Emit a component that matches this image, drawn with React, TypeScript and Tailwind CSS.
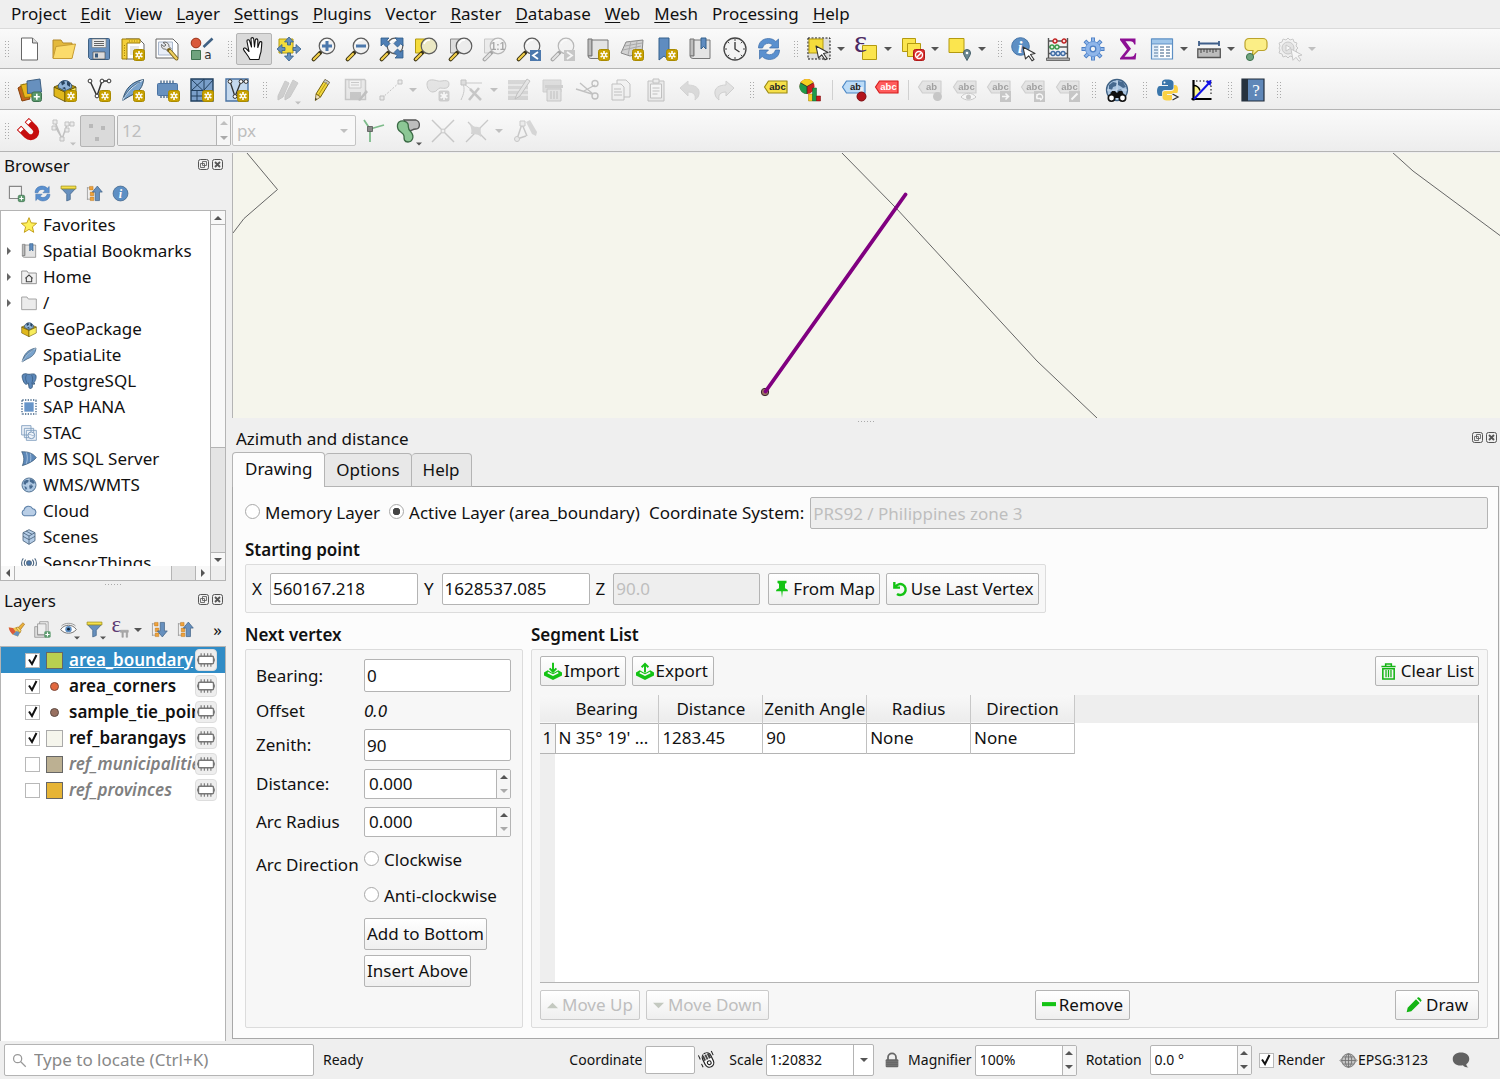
import React, { ReactNode } from "react";

/* ---------- shared drawing parts ---------- */

const Badge = ({ gray = false }: { gray?: boolean }) => (
  <g>
    <rect x="12.5" y="12.5" width="11" height="11" rx="2" fill={gray ? "#c4c4c4" : "#c9a200"} stroke={gray ? "#b4b4b4" : "#a98a00"} />
    <path d="M18 14v8M14.6 16l6.8 4M21.4 16l-6.8 4" stroke="#fff" strokeWidth="1.6" />
    <circle cx="18" cy="18" r="1.1" fill={gray ? "#c4c4c4" : "#c9a200"} />
  </g>
);

const Lens = ({ fill = "#f1f1f1" }: { fill?: string }) => (
  <g>
    <path d="M9.5 14.5L7.5 16.5" stroke="#444" strokeWidth="2.4" />
    <path d="M8.3 15.7L1.6 22.4" stroke="#3c3416" strokeWidth="4" strokeLinecap="round" />
    <path d="M7 17L1.8 22.2" stroke="#f2cf4a" strokeWidth="2.2" strokeLinecap="round" />
    <circle cx="15" cy="9" r="7.8" fill={fill} stroke="#5c5c5c" strokeWidth="1.2" />
    <path d="M10 7a6 6 0 0 1 6-4" fill="none" stroke="#fff" strokeWidth="1.5" />
  </g>
);

const Tag = ({ fill, stroke, text = "abc", color = "#222" }: { fill: string; stroke: string; text?: string; color?: string }) => (
  <g>
    <path d="M.5 9l4-6h18.500v12H4.500z" fill={fill} stroke={stroke} strokeLinejoin="round" strokeWidth="1.2" />
    <text x="13.500" y="12.200" textAnchor="middle" fontSize="9.500" fontWeight="700" fill={color} fontFamily="Liberation Sans, sans-serif">{text}</text>
  </g>
);

const Globe = () => (
  <g>
    <circle cx="12" cy="12" r="10.5" fill="#a9c4e0" stroke="#3f6184" strokeWidth="1.3" />
    <path d="M4 7l4-3 4 1-1 3-3 1-1 3-3-1zM13 3l5 1 3 5-3 1-3-2-2-1zM12 12l4-1 2 3-2 3-3 1-1-4zM5 14l3 1 1 3-2 1z" fill="#46698f" />
    <path d="M2 12h20M12 2v20" stroke="#dfeaf5" strokeWidth=".6" />
  </g>
);

const Refresh = () => (
  <g fill="#5a90cf" stroke="#3b6ca8" strokeWidth=".7" strokeLinejoin="round">
    <path d="M1.5 11C1.5 5 6 1.5 11.5 1.5c3 0 5.500 1.200 7.300 3l2.700-2.500v9h-9l3-3c-1-1-2.500-1.700-4-1.700C8.500 6.300 6.500 8 5.500 11z" />
    <path d="M22.500 13c0 6-4.500 9.500-10 9.500-3 0-5.500-1.200-7.300-3L2.500 22v-9h9l-3 3c1 1 2.500 1.700 4 1.700 3 0 5-1.700 6-4.700z" />
  </g>
);

const Floppy = () => (
  <g>
    <path d="M1.500 2.500a1 1 0 0 1 1-1h19a1 1 0 0 1 1 1v19a1 1 0 0 1-1 1h-18l-2-2z" fill="#6790be" stroke="#3f6184" />
    <path d="M5 2h14v8.500H5z" fill="#ececec" stroke="#777" strokeWidth=".6" />
    <path d="M7 4.500h10M7 6.500h10M7 8.500h10" stroke="#555" strokeWidth=".9" />
    <path d="M6 15h12v7H6z" fill="#dcdcdc" stroke="#444" strokeWidth=".6" />
    <path d="M8 16.500h3v4H8z" fill="#37587b" />
  </g>
);

const Pencil = () => (
  <g>
    <path d="M6 16L15 1.500l4.500 2.800L10.500 19z" fill="#f2d73c" stroke="#75600c" />
    <path d="M13.700 3.800L15 1.500l4.500 2.800-1.400 2.300z" fill="#c8c8c8" stroke="#777" strokeWidth=".7" />
    <path d="M6 16l-.7 6.500L10.500 19z" fill="#f1e2c0" stroke="#75600c" strokeWidth=".8" />
    <path d="M5.300 22.500l.2-2.500 1.600 1.100z" fill="#222" />
    <path d="M8.500 17L16.500 4" stroke="#b59a14" />
  </g>
);

const Funnel = () => (
  <g>
    <path d="M2 5l7.500 8v9.500l5-2V13L22 5z" fill="#6790be" stroke="#3f6184" />
    <path d="M1.500 1.500h21v4h-21z" fill="#f5e04a" stroke="#9b8a14" />
  </g>
);

const Info = () => (
  <g>
    <circle cx="12" cy="12" r="10.500" fill="#5d8fc4" stroke="#3f6184" />
    <text x="12" y="18" textAnchor="middle" fontSize="17" fontStyle="italic" fontWeight="700" fill="#fff" fontFamily="Liberation Serif, serif">i</text>
  </g>
);

const Cursor = () => <path d="M9 9l12 6.500-4.500 1 3.500 5-2 1.300-3.300-5-3.200 3z" fill="#fff" stroke="#333" strokeWidth="1.100" strokeLinejoin="round" />;

const TreeArrow = ({ up }: { up: boolean }) => (
  <g>
    <path d="M2 3v18M2 4h6M2 20h6" stroke="#888" fill="none" />
    <path d="M5 2h5v5H5zM6 10h5v5H6zM6 17h5v5H6z" fill="#f0a23a" stroke="#b06c10" strokeWidth=".6" />
    {up ? <path d="M13 22V10H9l7-8.500 7 8.500h-4v12z" fill="#6790be" stroke="#3f6184" /> : <path d="M13 2v12H9l7 8.500 7-8.500h-4V2z" fill="#6790be" stroke="#3f6184" />}
  </g>
);

const Box = () => (
  <g>
    <path d="M1 9l11 5v9.500L1 18z" fill="#e0b81c" stroke="#5c4a05" strokeWidth=".8" />
    <path d="M23 9l-11 5v9.500L23 18z" fill="#f7ec5c" stroke="#5c4a05" strokeWidth=".8" />
    <path d="M1 9l11-5 11 5-11 5z" fill="#c9a200" stroke="#5c4a05" strokeWidth=".8" />
    <path d="M5 9.500a7 7 0 1 1 14 0L12 13z" fill="#8fb2d6" stroke="#37587b" />
    <path d="M8 4l3-1.500 1 3-3 2zM14 3l3 2v4l-3-2zM9 10l3-1 1 3z" fill="#29445f" />
  </g>
);

const Feather = () => (
  <g>
    <path d="M1.500 22.500C4 12 9 4 22.500 1.500 22 8 19 14 9 18z" fill="#7aa3cc" stroke="#34536f" strokeLinejoin="round" />
    <path d="M1.500 22.500C6 14 12 8 22 2" fill="none" stroke="#dbe8f5" />
    <path d="M3 19C7 12 12 7 19 4" fill="none" stroke="#34536f" strokeWidth=".7" />
  </g>
);

const Chip = () => (
  <g>
    <path d="M5 2.500v4M8 2.500v4M11 2.500v4M14 2.500v4M17 2.500v4M5 16v4M8 16v4M11 16v4M14 16v4M17 16v4" stroke="#3f6184" strokeWidth="1.300" />
    <rect x="1.500" y="5.500" width="20" height="12" rx="1" fill="#6790be" stroke="#4a73a3" />
  </g>
);

const Book = () => (
  <g>
    <path d="M2 2h4v17H2z" fill="#bdbdbd" stroke="#777" />
    <path d="M6 3h16v18.500H5A3 3 0 0 1 2 19h4z" fill="#e4e4e4" stroke="#777" />
  </g>
);

const Rings = ({ points }: { points: [number, number][] }) => (
  <g>{points.map(([x, y]) => <circle key={`${x}-${y}`} cx={x} cy={y} r="1.900" fill="#fff" stroke="#333" />)}</g>
);

/* ---------- icon table (24 x 24 grid) ---------- */

const icons: Record<string, ReactNode> = {
  newDoc: <g><path d="M3.500 1h11l5 5v17h-16z" fill="#fff" stroke="#666" /><path d="M14.500 1v5h5" fill="#ddd" stroke="#666" /></g>,
  open: <g><path d="M1 3h8l2 3h9v15H1z" fill="#e3b93c" stroke="#b3892a" /><path d="M4 9.500L23.500 7 20 21.500H1z" fill="#fbdb6b" stroke="#c79c33" /></g>,
  save: <Floppy />,
  newLayout: <g><path d="M5 2h13l5 5v15H5z" fill="#fff" stroke="#666" /><path d="M1 2h18v4H6v16H1z" fill="#f4cf3a" stroke="#9a7a08" /><path d="M9 9h9v9H9z" fill="#e8e8e8" /><path d="M3.500 8v12M8 4h9" stroke="#9a7a08" strokeDasharray="1 1.500" /><Badge /></g>,
  layoutManager: <g><path d="M1 2h17l5 5v14H1z" fill="#fff" stroke="#666" /><path d="M3.500 5h14v13h-14z" fill="#e9eef7" stroke="#a9b7cc" /><path d="M8 5.500c3-1 6 .5 6 4l2 2-3 3-2.500-2.500c-3 .5-4.500-2-4-4.500l2.500 2 2-1.500z" fill="#e8e8e8" stroke="#666" /><path d="M14 13l7.500 8.500" stroke="#77601a" strokeWidth="4" strokeLinecap="round" /><path d="M15 14l6.500 7.500" stroke="#f0d060" strokeWidth="2.200" strokeLinecap="round" /></g>,
  style: <g><circle cx="6" cy="6" r="4.800" fill="#d9593b" stroke="#9b3217" /><path d="M13.500 10L22.500 1.500" stroke="#3f6184" strokeWidth="2.600" /><path d="M1.500 13.500h9v9h-9z" fill="#6fa37e" stroke="#3f7350" /><text x="18" y="22" textAnchor="middle" fontSize="12" fill="#333" fontFamily="DejaVu Sans, sans-serif">a</text></g>,
  hand: <path d="M8 22.500C6 18 3 15.500 1.500 12.500 1.200 11 3 10.200 4.500 12L7 14.500 5 4.500c-.3-2 2-2.300 2.600-.6L9.500 10 9 2c0-1.800 2.500-1.800 2.700 0L12.500 10l.8-7c.3-1.700 2.500-1.500 2.500.3L15.800 10.500l1.700-5c.6-1.500 2.500-1 2.300.6-.5 4 0 8-1.800 12L17 22.500z" fill="#fff" stroke="#111" strokeWidth="1.100" strokeLinejoin="round" />,
  panSel: <g><path d="M2 2h14v14H2z" fill="#f5dc3c" stroke="#b39a10" /><g fill="#6790be" stroke="#35608c" strokeWidth=".8"><path d="M12 0l4.500 5h-3v3h-3V5h-3zM12 24l4.500-5h-3v-3h-3v3h-3zM0 12l5-4.500v3h3v3H5v3zM24 12l-5-4.500v3h-3v3h3v3z" /></g><path d="M10 10h4v4h-4z" fill="#f5dc3c" /></g>,
  zoomIn: <g><Lens /><path d="M15 4v10M10 9h10" stroke="#4c78ac" strokeWidth="3" /></g>,
  zoomOut: <g><Lens /><path d="M10 9h10" stroke="#4c78ac" strokeWidth="3" /></g>,
  zoomFull: <g><Lens /><g fill="#4f7fb5" stroke="#2f5a88" strokeWidth=".8"><path d="M1 1h8L6.800 3.200 10 6.500 6.500 10 3.200 6.800 1 9zM23 1h-8l2.200 2.200L14 6.500 17.500 10l3.300-3.200L23 9zM23 21h-8l2.200-2.200L14 15.500 17.500 12l3.300 3.200L23 13z" /></g></g>,
  zoomSel: <g><path d="M1.500 2h12v14h-12z" fill="#f5dc3c" stroke="#b39a10" /><Lens fill="#ebe8c4" /></g>,
  zoomLayer: <g><path d="M1.500 2h12v14h-12z" fill="#ddd" stroke="#888" /><Lens fill="#ececec" /></g>,
  zoomNative: <g><path d="M1.500 2h12v14h-12z" fill="#ddd" stroke="#888" /><Lens /><text x="15" y="12.500" textAnchor="middle" fontSize="10" fontWeight="700" fill="#333" fontFamily="Liberation Sans, sans-serif">1:1</text></g>,
  zoomLast: <g><Lens /><path d="M13 13h11v11H13z" fill="#4c78ac" /><path d="M21 15l-5 3.500 5 3.500" fill="none" stroke="#fff" strokeWidth="1.800" /></g>,
  zoomNext: <g><Lens /><path d="M13 13h11v11H13z" fill="#888" /><path d="M16 15l5 3.500-5 3.500" fill="none" stroke="#fff" strokeWidth="1.800" /></g>,
  newMap: <g><Book /><Badge /></g>,
  new3d: <g><path d="M6 5l17-2-1 13-12 3-9-3z" fill="#d2d2d2" stroke="#888" /><path d="M5 9l17-3M3 13l18-4M11 4l-3 14M17 4l-2 13" stroke="#aaa" fill="none" /><Badge /></g>,
  newBookmark: <g><path d="M5 1h10v22l-5-4-5 4z" fill="#5f8cc0" stroke="#35608c" /><Badge /></g>,
  bookmarks: <g><Book /><path d="M13 1h5v11l-2.500-2.500L13 12z" fill="#5f8cc0" stroke="#35608c" /></g>,
  clock: <g><circle cx="12" cy="12" r="11" fill="#f3f3f3" stroke="#444" strokeWidth="1.300" /><path d="M12 2v2M12 20v2M2 12h2M20 12h2M5 5l1.200 1.200M19 5l-1.200 1.200M5 19l1.200-1.200M19 19l-1.200-1.200" stroke="#444" /><path d="M12 5v7l4.500 3" fill="none" stroke="#333" strokeWidth="1.300" /></g>,
  refresh: <Refresh />,
  select: <g><path d="M1 1h22v21H1z" fill="#dedede" stroke="#111" strokeDasharray="2 1.500" /><path d="M2 2h14v14H2z" fill="#f5dc3c" stroke="#b39a10" /><Cursor /></g>,
  expr: <g><path d="M8.500 8.500h14v14h-14z" fill="#fbe54e" stroke="#b39a10" /><text x="6.500" y="15" textAnchor="middle" fontSize="31" fill="#4b2a63" fontFamily="Liberation Serif, serif">ε</text></g>,
  deselect: <g><path d="M1.500 1.500h13v13h-13z" fill="#fbe54e" stroke="#b39a10" /><path d="M6.500 6.500h13v13h-13z" fill="#fbe54e" stroke="#b39a10" /><rect x="12.500" y="12.500" width="11" height="11" rx="2" fill="#d93030" stroke="#b01818" /><circle cx="18" cy="18" r="3.500" fill="none" stroke="#fff" strokeWidth="1.400" /><path d="M20.500 15.500l-5 5" stroke="#fff" strokeWidth="1.400" /></g>,
  selectLoc: <g><path d="M1 1.500h15v14H1z" fill="#fbe54e" stroke="#b39a10" /><path d="M19 23.500c-2-4-3.500-5.500-3.500-7.500a3.500 3.500 0 0 1 7 0c0 2-1.500 3.500-3.500 7.500z" fill="#6a8791" stroke="#46606a" /><circle cx="19" cy="16" r="1.300" fill="#fff" /></g>,
  identify: <g><circle cx="9.500" cy="9.500" r="8.800" fill="#5d8fc4" stroke="#4574a8" /><text x="9" y="15.500" textAnchor="middle" fontSize="17" fontStyle="italic" fontWeight="700" fill="#fff" fontFamily="Liberation Serif, serif">i</text><g transform="translate(3 1)"><Cursor /></g></g>,
  abacus: <g><path d="M2.500 1v20M21.500 1v20M2 4h20M2 10h20M2 16.500h20" stroke="#555" fill="none" strokeWidth="1.400" /><path d="M.5 21h23v2.500H.5z" fill="#aaa" stroke="#555" strokeWidth=".8" /><g strokeWidth="1.300"><g fill="#fbdede" stroke="#c02020"><circle cx="9" cy="4" r="2" /><circle cx="18" cy="4" r="2" /></g><g fill="#ddf3dd" stroke="#3a9a4a"><circle cx="6" cy="10" r="2" /><circle cx="11" cy="10" r="2" /></g><g fill="#dde8f6" stroke="#3f6ca6"><circle cx="7" cy="16.500" r="2" /><circle cx="12" cy="16.500" r="2" /><circle cx="17" cy="16.500" r="2" /></g></g></g>,
  gear: <g><path d="M12 .5v23M.5 12h23M3.900 3.900l16.200 16.200M20.100 3.900L3.900 20.100" stroke="#4c7fc4" strokeWidth="4" /><path d="M12 1.300v21.400M1.300 12h21.400M4.500 4.500l15 15M19.500 4.500l-15 15" stroke="#8fb6ea" strokeWidth="2.200" /><circle cx="12" cy="12" r="7.500" fill="#8fb6ea" stroke="#6a99d8" /><circle cx="12" cy="12" r="2.800" fill="#f4f4f4" stroke="#4c7fc4" strokeWidth="1.300" /></g>,
  sigma: <path d="M4 1.500h15.500v6h-1.300C17.700 5 16.500 4.200 14 4.200H9.500l5.500 7.500-6.500 8h6c3 0 4-1 4.500-3.500h1.300l-.7 6.300H4v-1.300l7-8.700L4 3z" fill="#8d0f94" />,
  table: <g><path d="M1.500 2h21v20h-21z" fill="#fff" stroke="#5d8fc4" strokeWidth="1.200" /><path d="M1.500 2h21v5h-21z" fill="#9fc6ea" stroke="#5d8fc4" /><path d="M4 10h4M10 10h4M16 10h4M4 13h4M10 13h4M16 13h4M4 16h4M10 16h4M16 16h4M4 19h4M10 19h4M16 19h4" stroke="#7a93ad" strokeWidth="1.300" /><path d="M2 8h7v14H2z" fill="#9fc6ea" opacity=".3" /></g>,
  measure: <g><path d="M1.500 6.500h21M2 4v5M22 4v5" stroke="#3f5f8a" strokeWidth="1.800" /><path d="M.8 12h22.500v8.500H.8z" fill="#bcbcbc" stroke="#555" strokeWidth="1.300" /><path d="M4 12v4M7 12v3M10 12v4M13 12v3M16 12v4M19 12v3" stroke="#444" /></g>,
  tip: <g><path d="M5 1.500h14a4 4 0 0 1 4 4v4a4 4 0 0 1-4 4h-5l-6 5.500 1-5.500H5a4 4 0 0 1-4-4v-4a4 4 0 0 1 4-4z" fill="#fbee86" stroke="#bba32c" strokeWidth="1.200" /><circle cx="6" cy="20" r="3.600" fill="#6fa37e" stroke="#3f7350" /></g>,
  action: <g fill="#eee" stroke="#888"><path d="M10 1l2 2 3-1 1 3 3 1-1 3 2 2-2 2 1 3-3 1-1 3-3-1-2 2-2-2-3 1-1-3-3-1 1-3-1-2 1-2-1-3 3-1 1-3 3 1z" /><circle cx="10" cy="11" r="6" fill="#ccc" /><path d="M8 8l5 3-5 3z" fill="#fff" /><g transform="translate(4 3)"><path d="M9 9l11 6-4 1 3 4-2 1.300-3-4-3 3z" fill="#fff" /></g></g>,
  addLayer: <g><path d="M0 10l6-4 6 15-8 2z" fill="#c4651b" stroke="#87400a" /><path d="M4 6h9v14l-8-1z" fill="#e8b51e" stroke="#9a7a08" transform="rotate(-12 8 12)" /><path d="M9 3l13-2 1.500 13-14 1.500z" fill="#6790be" stroke="#3f6184" /><rect x="14" y="14" width="9.500" height="9.500" rx="2" fill="#5c9a6e" stroke="#3f7350" /><path d="M18.800 15.800v6M15.800 18.800h6" stroke="#fff" strokeWidth="1.600" /></g>,
  geopackage: <Box />,
  newGpkg: <g><Box /><Badge /></g>,
  newShp: <g><path d="M3 3l7 15 5-15h7" fill="none" stroke="#333" strokeWidth="1.500" /><Rings points={[[3, 3], [10, 18], [15, 3], [22, 3]]} /><Badge /></g>,
  feather: <Feather />,
  newSpatialite: <g><Feather /><Badge /></g>,
  newMem: <g><Chip /><Badge /></g>,
  newMesh: <g><path d="M1 1h22v22H1z" fill="#7a9fca" stroke="#22405f" strokeWidth="1.400" /><path d="M1 12.500h22M14 1v22M2 2l11 10.500M14 1L2 12M14 12L23 2M1 18h13M7 12v11" stroke="#22405f" fill="none" /><Badge /></g>,
  newVirtual: <g><path d="M1 1h22v22H1z" fill="#c5d9ee" stroke="#4a73a3" strokeWidth="1.400" /><path d="M5 3.500l5 15L16 3.500h5" fill="none" stroke="#333" strokeWidth="1.300" /><Rings points={[[5, 3.5], [10, 18.5], [16, 3.5], [21, 3.5]]} /><Badge /></g>,
  pencils: <g><path d="M2 18L9 3l4 2-6 14-5 3zM9 18L17 2l5 3-8 14-5 3z" fill="#999" stroke="#888" /></g>,
  pencil: <Pencil />,
  saveEdits: <g><path d="M1.500 1.500h19l1 1v19h-20z" fill="#d8d8d8" stroke="#888" strokeWidth="1.500" /><path d="M5 2h12v8H5z" fill="#eee" stroke="#888" /><path d="M7 4.500h8M7 7h8" stroke="#888" /><path d="M6 14h11v7H6z" fill="#888" /><path d="M14 22l8-10 2 2-8 9z" fill="#777" /></g>,
  digitize: <g><path d="M3 20L21 4" stroke="#777" strokeDasharray="2 1.500" /><path d="M1 18h4v4H1zM19 2h4v4h-4z" fill="#ddd" stroke="#777" /></g>,
  addPoly: <g><path d="M1 6c0-6 8-4 11-3s11-3 11 3-7 4-9 4-3 4-7 4S1 10 1 6z" fill="#ccc" stroke="#888" /><rect x="12.500" y="12.500" width="11" height="11" rx="2" fill="#999" /><path d="M18 14v8M14.600 16l6.800 4M21.400 16l-6.800 4" stroke="#fff" strokeWidth="1.600" /></g>,
  vertex: <g><path d="M3 5h19M3 5c2 7 1 10-2 17M3 5l10 8" fill="none" stroke="#888" /><path d="M1 2h5v5H1z" fill="#bbb" stroke="#777" /><path d="M9 22L19 10M10 11l11 11" stroke="#888" strokeWidth="2.600" /></g>,
  editAttr: <g><path d="M1 2h20v20H1z" fill="#aaa" /><path d="M1 7h20M1 12h20M1 17h20" stroke="#fff" /><path d="M8 21l2-5L20 1l3 2-10 15z" fill="#ccc" stroke="#777" /></g>,
  trash: <g><path d="M2 2h18v12H2z" fill="#bbb" stroke="#999" /><path d="M4 7h18v3H4z" fill="#999" /><path d="M6 11h14v12H6z" fill="#ccc" stroke="#888" /><path d="M10 13v8M13 13v8M16 13v8" stroke="#777" /></g>,
  cut: <g fill="none" stroke="#777" strokeWidth="1.400"><path d="M1 11l16 5M5 5l13 11M20 7L9 13" /><circle cx="20" cy="5.500" r="3" /><circle cx="20" cy="18" r="3" /></g>,
  copy: <g fill="#eee" stroke="#777"><path d="M8 2h9l4 4v13H8z" /><path d="M3 6h9l3 3v13H3z" /><path d="M5 11h7M5 14h8M5 17h8" /></g>,
  paste: <g fill="#ddd" stroke="#777"><path d="M4 3h16v20H4z" /><path d="M6.500 6h11v14h-11z" fill="#f5f5f5" /><path d="M9 1h6v4H9z" /><path d="M8.500 10h7M8.500 13h7M8.500 16h5" /></g>,
  undo: <path d="M2 10l8-7v4c7 0 12 3 11 9-.5 3-2 4.500-4 6 1-5-1-8-7-8v4z" fill="#b4b4b4" stroke="#a4a4a4" />,
  redo: <path d="M22 10l-8-7v4C7 7 2 10 3 16c.5 3 2 4.500 4 6-1-5 1-8 7-8v4z" fill="#c8c8c8" stroke="#999" />,
  label: <Tag fill="#f6e04a" stroke="#9b8a14" />,
  diagram: <g><circle cx="8" cy="8.500" r="7.500" fill="#c81e1e" /><path d="M8 8.500L1.500 4.700A7.500 7.500 0 0 1 14.500 4.700z" fill="#f5d020" /><path d="M8 8.500v7.500A7.500 7.500 0 0 1 1.500 4.700z" fill="#1f9a4a" /><path d="M9.500 16h4v7h-4z" fill="#f5d020" stroke="#a07f00" strokeWidth=".5" /><path d="M13.500 10h4v13h-4z" fill="#1f9a4a" stroke="#0c5a26" strokeWidth=".5" /><path d="M17.500 18h4v5h-4z" fill="#c81e1e" stroke="#700" strokeWidth=".5" /><path d="M8 8.500V16M8 8.500L1.500 4.700M8 8.500l6.500-3.800" stroke="#222" strokeWidth=".7" /></g>,
  labelPin: <g><Tag fill="#bcdcf8" stroke="#4a86c4" text="ab" /><path d="M19.500 16V9" stroke="#eee" strokeWidth="2.600" /><circle cx="19.500" cy="18.500" r="4.500" fill="#b3141c" stroke="#7a0c10" /></g>,
  labelRed: <Tag fill="#ff5c5c" stroke="#d41c1c" color="#fff" />,
  labelMove1: <g><Tag fill="#ccc" stroke="#999" text="ab" /><circle cx="19.500" cy="18.500" r="4.500" fill="#888" /></g>,
  labelEye: <g><Tag fill="#ccc" stroke="#999" /><path d="M8 19c4-5 11-5 15 0-4 4-11 4-15 0z" fill="#fff" stroke="#888" /><circle cx="15.500" cy="19" r="2.500" fill="#888" /></g>,
  labelArrow: <g><Tag fill="#ccc" stroke="#999" /><path d="M13 13h11v11H13z" fill="#888" /><path d="M15 18.500h6M18.500 15.500l3 3-3 3" stroke="#fff" strokeWidth="1.600" fill="none" /></g>,
  labelRotate: <g><Tag fill="#ccc" stroke="#999" /><path d="M13 13h11v11H13z" fill="#888" /><path d="M16 20.500a3 3 0 1 1 3 1.500M16 16v4.500h4" stroke="#fff" strokeWidth="1.400" fill="none" /></g>,
  labelEdit: <g><Tag fill="#ccc" stroke="#999" /><path d="M13 13h11v11H13z" fill="#888" /><path d="M15.500 21.500l6-6" stroke="#fff" strokeWidth="2" fill="none" /></g>,
  search: <g><Globe /><path d="M3 20l4-7h3l2 2 2-2h3l4 7z" fill="#111" /><circle cx="6.500" cy="20" r="3.200" fill="#fff" stroke="#111" strokeWidth="1.600" /><circle cx="17.500" cy="20" r="3.200" fill="#fff" stroke="#111" strokeWidth="1.600" /></g>,
  python: <g><path d="M11 1.500c-5 0-5 2-5 3.500v2h6v1H4c-2 0-3 2-3 5s1 5 3 5h2v-3c0-2 1-3 3-3h6c1.500 0 2.500-1 2.500-2.500V5c0-2-1.500-3.500-6.500-3.500z" fill="#3a76ab" /><circle cx="8.500" cy="4.500" r="1" fill="#fff" /><path d="M12 22.500c5 0 5-2 5-3.500v-2h-6v-1h8c2 0 3-1.500 3-4.500s-1-4.500-3-4.500h-1v3c0 2-1 3-3 3H9c-1.500 0-2.500 1-2.500 2.500V19c0 2 1 3.500 5.500 3.500z" fill="#fbd144" /><path d="M16 15h7v8h-7z" fill="#f4f4f4" /><path d="M16.500 16l5.500 3-5.500 3" fill="none" stroke="#333" strokeWidth="1.300" /></g>,
  azimuth: <g><path d="M3.500 7c3 0 6 2 6.500 6l-6.500 8z" fill="#fbf58a" /><path d="M3.500 2v20.500M1.500 21h20" stroke="#000" strokeWidth="2.200" /><path d="M6 3h15M21 4v14" stroke="#000" strokeDasharray="1.500 2" /><path d="M3.500 7.500c3 0 5.500 2 6.500 5" fill="none" stroke="#000" strokeWidth="1.500" /><path d="M4 21L20 4" stroke="#1010e8" strokeWidth="2" /><path d="M21.500 2l-1 6-5-4.500z" fill="#1010e8" /></g>,
  help: <g><path d="M1 1h22v22H1z" fill="#5f87b8" stroke="#222e3c" strokeWidth="1.200" /><path d="M1 1h6v22H1z" fill="#26323f" /><text x="15" y="18" textAnchor="middle" fontSize="17" fill="#fff" fontFamily="Liberation Serif, serif">?</text></g>,
  magnet: <g transform="rotate(-45 12 12)"><path d="M3.500 2h6v11a2.500 2.500 0 0 0 5 0V2h6v11a8.500 8.500 0 0 1-17 0z" fill="#c60d0d" /><path d="M4 2.500h5v4H4zM15 2.500h5v4h-5z" fill="#fff" stroke="#c60d0d" strokeWidth=".8" /></g>,
  snapVertex: <g><path d="M4 3l7 17 5-14h6M5 9l6 10" fill="none" stroke="#777" strokeWidth="1.500" /><path d="M2 1h4v4H2zM1 7h4v4H1zM9 18h4v4H9zM14 3h4v4h-4zM19 3h4v4h-4zM14 9h4v4h-4z" fill="#ddd" stroke="#777" /></g>,
  snapDots: <path d="M4 5h4v4H4zM16 7h4v4h-4zM10 18h4v4h-4z" fill="#888" />,
  topo: <g><path d="M9 10L3 1M9 10l14-4M9 10v13" stroke="#7dbb8a" strokeWidth="1.800" /><path d="M6.500 7.500h5v5h-5z" fill="#888" stroke="#555" strokeWidth=".8" /></g>,
  overlap: <g><path d="M8 1h12c5 2 4 9 0 9s-4 2-7 2z" fill="#bdbdbd" stroke="#555" strokeWidth="1.300" /><path d="M3 3c3-2 8-1 9 2 1 4-1 4 3 8 4 5 1 10-3 10s-4-3-4-6-5-4-6-7 0-6 1-7z" fill="#8cc795" stroke="#3b6b45" strokeWidth="1.300" /></g>,
  intersect: <g><path d="M1 1l22 22M23 1L1 23" stroke="#888" strokeWidth="1.500" /><circle cx="12" cy="12" r="2" fill="#eee" stroke="#888" /></g>,
  selfSnap: <g><path d="M1 23L23 1M3 3l18 18" stroke="#888" strokeWidth="1.300" /><path d="M4 4c4 5 8 3 12 5-1 4 1 6 0 9-3-3-6-3-10-3 1-4 0-7-2-11z" fill="#aaa889" /></g>,
  trace: <g><path d="M4 20L9 5M4 20l9-3M9 5l5 12" stroke="#888" strokeWidth="1.500" fill="none" /><circle cx="4" cy="20" r="2.500" fill="#ddd" stroke="#888" /><path d="M7 2h5v5H7z" fill="#ddd" stroke="#888" /><path d="M13 3l4-2 7 12-1 4-4-2z" fill="#aaa" /></g>,
  addSel: <g><path d="M2 2h17v17H2z" fill="#f4f4f4" stroke="#888" strokeWidth="1.600" /><rect x="14.500" y="14.500" width="9" height="9" rx="2" fill="#5c9a6e" stroke="#3f7350" /><path d="M19 16v6M16 19h6" stroke="#fff" strokeWidth="1.600" /></g>,
  funnel: <Funnel />,
  info: <Info />,
  collapse: <TreeArrow up />,
  expand: <TreeArrow up={false} />,
  star: <path d="M12 1l3.200 7.800 8.300.6-6.400 5.400 2 8.200L12 18.500 4.900 23l2-8.200L.5 9.400l8.300-.6z" fill="#fdf05a" stroke="#c09a12" strokeWidth="1.400" strokeLinejoin="round" />,
  home: <g><path d="M1 3h8l2 3h12v16H1z" fill="#f0f0f0" stroke="#888" strokeWidth="1.300" /><path d="M6.500 14L12 9l5.500 5M8 13v6h8v-6" fill="none" stroke="#444" strokeWidth="1.600" /></g>,
  folder: <path d="M1 3h8l2 3h12v16H1z" fill="#ececec" stroke="#999" strokeWidth="1.300" />,
  postgres: <g><path d="M3 2c4-2 6 0 9 0s8-2 10 1c2 4-1 10-3 12l2 1c-1 1-3 1-4 0v5c-1 3-5 3-5 0l-1-6c-2 2-4 3-6 0C3 12 0 4 3 2z" fill="#5c88ba" stroke="#37587b" strokeWidth="1.300" /><path d="M8 3c-2 4-1 8 1 12M16 3c2 4 2 8 0 13" fill="none" stroke="#37587b" /></g>,
  hana: <g><path d="M5 5h14v14H5z" fill="#6795c9" /><path d="M2 1.500h21M2 22.500h21M1.500 2v21M22.500 2v21" stroke="#3f6184" strokeWidth="2" strokeDasharray="2 2" /></g>,
  stac: <g fill="#eef3f9" stroke="#7e9cbd"><path d="M1 1h14v14H1zM5 5h14v14H5zM8 8h15v15H8z" strokeWidth="1.300" /><circle cx="15.500" cy="15.500" r="5" strokeWidth="1.500" /><path d="M11 15c3-3 6 3 9 0" /></g>,
  mssql: <g><path d="M1 1c8 0 16 1 22 9-5 6-12 9-21 12 3-7 3-14-1-21z" fill="#5d88b8" stroke="#34536f" /><path d="M8 2c2 6 2 11 0 17M14 4c1 4 1 8 0 12" stroke="#c5d9ee" fill="none" /></g>,
  globe: <Globe />,
  cloud: <path d="M5 19a4.500 4.500 0 0 1-.5-8.500 7 7 0 0 1 13-2A5.500 5.500 0 0 1 19 19z" fill="#b9cee6" stroke="#5a7ea6" strokeWidth="1.600" />,
  cube: <g stroke="#4c6680" strokeWidth="1.300" strokeLinejoin="round"><path d="M12 1l9 4.500v12L12 23l-9-5.500v-12z" fill="#b4cce6" /><path d="M3 5.500l9 5 9-5M12 10.500V23M3 11l9 5 9-5M7.500 3l9 5" fill="none" /></g>,
  sensor: <g fill="none" stroke="#4c6680" strokeWidth="1.600"><circle cx="12" cy="12" r="3.500" fill="#4c78ac" /><path d="M7 7c-2.500 3-2.500 7 0 10M3.500 5C0 9 0 15 3.500 19M17 7c2.500 3 2.500 7 0 10M20.500 5c3.500 4 3.500 10 0 14" /></g>,
  brush: <g><path d="M12.500 11L21 2.500l2.500 2-7.500 10z" fill="#e9b03b" stroke="#9a6414" strokeWidth=".8" /><path d="M1 9l5 1 6-1 6 6-4 7-8-3z" fill="#f0c850" /><path d="M1 9l6 1 4 5-4 4c-3-2-5-5-6-10z" fill="#d9593b" /><path d="M7 19l5-5 5 2-3 6z" fill="#6790be" /><path d="M11 9.500l3-1 4.500 5-1.500 3z" fill="#f7dd6a" stroke="#9a6414" strokeWidth=".8" /></g>,
  group: <g><path d="M8 1h12v15H8z" fill="#eee" stroke="#888" /><path d="M5 4h12v15H5z" fill="#eee" stroke="#888" /><path d="M1 8h4v12h12v3H1z" fill="#ddd" stroke="#888" /><rect x="14.500" y="14.500" width="9" height="9" rx="2" fill="#5c9a6e" /><path d="M19 16v6M16 19h6" stroke="#fff" strokeWidth="1.600" /></g>,
  eye: <g><path d="M1 12C6 4 18 4 23 12c-5 7-17 7-22 0z" fill="#fff" stroke="#666" strokeWidth="1.300" /><circle cx="12" cy="11.500" r="4.500" fill="#5d8fc4" /><circle cx="12" cy="11.500" r="2" fill="#123" /><path d="M2 7c5-5 15-5 20 0" fill="none" stroke="#777" /></g>,
  exprFilter: <g><text x="6" y="16" textAnchor="middle" fontSize="32" fill="#5c3a73" fontFamily="Liberation Serif, serif">ε</text><path d="M12 13h11v3h-1v7h-2v-7h-4v7h-2v-7h-2z" fill="#aaa" stroke="#888" strokeWidth=".6" /></g>,
  chipGray: <g fill="none" stroke="#777"><path d="M5.500 3v4M9.800 3v4M14.200 3v4M18.500 3v4M5.500 17v4M9.800 17v4M14.200 17v4M18.500 17v4" strokeWidth="1.500" /><rect x="2" y="7" width="20" height="10" rx="1.500" fill="#fff" strokeWidth="1.800" /><path d="M1 10v4M23 10v4" strokeWidth="1.500" /></g>,
  pin: <path d="M6 1h12v3l-2 1v6c3 1 4 2.500 4 4h-7l-1 8.500L11 15H4c0-1.500 1-3 4-4V5L6 4z" fill="#14c314" />,
  back: <path d="M3.500 1.500v8.500h8.500M5 9a8.200 8.200 0 1 1 2.500 10.500" fill="none" stroke="#14c314" strokeWidth="3.600" />,
  importIcon: <g><path d="M0 14l5-3 7 4 7-4 5 3v4l-12 6L0 18z" fill="#14c314" /><path d="M5 14l7 3.500 7-3.500" fill="none" stroke="#f7f7f7" strokeWidth="2" /><path d="M12 1v11M7.500 8.500L12 13l4.500-4.500" fill="none" stroke="#14c314" strokeWidth="2.600" /></g>,
  exportIcon: <g><path d="M0 14l5-3 7 4 7-4 5 3v4l-12 6L0 18z" fill="#14c314" /><path d="M5 14l7 3.500 7-3.500" fill="none" stroke="#f7f7f7" strokeWidth="2" /><path d="M12 14V3M7.500 7L12 2.500 16.500 7" fill="none" stroke="#14c314" strokeWidth="2.600" /></g>,
  bin: <g fill="none" stroke="#14b414" strokeWidth="2.200"><path d="M2 5h20M8 4V1.500h8V4M4 8v14.500h16V8z" /><path d="M8.500 10v10M12 10v10M15.500 10v10" strokeWidth="1.800" /></g>,
  minus: <path d="M0 7h24v7H0z" fill="#14c314" />,
  draw: <path d="M1 23l1.500-7L15 3.500l5.500 5.500L8 21.500zM16.500 2l1.500-1.500c1-1 4.500 2.500 5.500 4.500L22 7.500z" fill="#14b414" />,
  mouse: <g transform="rotate(-25 12 12)"><rect x="6" y="2" width="12" height="20" rx="6" fill="#fff" stroke="#222" strokeWidth="1.600" /><path d="M7 4h10v7H7z" fill="#444" /><path d="M10 2v9M13.500 2v9" stroke="#fff" /><circle cx="12" cy="16" r="2.500" fill="none" stroke="#222" strokeWidth="1.400" /><path d="M3 1v6M21 3v6M2 13v5" stroke="#222" strokeWidth="1.400" /></g>,
  lock: <g><path d="M6 12V8a6 6 0 0 1 12 0v4" fill="none" stroke="#666" strokeWidth="2.600" /><rect x="2.500" y="11" width="19" height="12" rx="1.500" fill="#666" /><path d="M3 14h18M3 17h18M3 20h18" stroke="#7c7c7c" /></g>,
  crs: <g fill="none" stroke="#707070" strokeWidth="1.200"><circle cx="12" cy="12" r="9.500" fill="#c4c4c4" /><path d="M1 12h22M12 2.500v19M4 7h16M4 17h16" /><ellipse cx="12" cy="12" rx="4.500" ry="9.500" /><path d="M3 9L0 12l3 3M21 9l3 3-3 3" /></g>,
  bubble: <path d="M12 2c6.500 0 11 3.500 11 8.500 0 3-1.500 5.500-4 7 .3 2 1.500 3.500 3 4.500-3.500 0-6-1-7.500-3-8 1.500-13.500-2.500-13.500-8.500C1 5.500 5.500 2 12 2z" fill="#616161" />,
  find: <g fill="none" stroke="#999" strokeWidth="2"><circle cx="9" cy="9" r="6.500" /><path d="M14 14l8 8" /></g>,
};

const Icon = ({ name, className = "size-6", off = false }: { name: string; className?: string; off?: boolean }) => (
  <svg viewBox="0 0 24 24" aria-hidden="true" className={`${className} shrink-0 overflow-visible ${off ? "opacity-40 grayscale" : ""}`}>{icons[name]}</svg>
);

const Tri = ({ dir = "down", className = "w-2 fill-[#555]" }: { dir?: "up" | "down" | "left" | "right"; className?: string }) => {
  const d = { down: "M0 2h8L4 6z", up: "M0 6h8L4 2z", left: "M6 0v8L2 4z", right: "M2 0v8l4-4z" }[dir];
  return <svg viewBox="0 0 8 8" aria-hidden="true" className={`${className} shrink-0`}><path d={d} /></svg>;
};

/* ---------- tool bars ---------- */

const Grip = ({ className = "w-[17px]" }: { className?: string }) => (
  <div className={`flex shrink-0 justify-end pr-1 ${className}`}>
    <div className="h-[18px] w-[5px] bg-[radial-gradient(circle,#aaa_0.7px,transparent_1px)] bg-size-[3px_3px]" />
  </div>
);

type Tool = { icon: string; label: string; off?: boolean; menu?: boolean; on?: boolean; corner?: boolean };

const ToolButton = ({ icon, label, off, menu, on, corner }: Tool) => (
  <button type="button" aria-label={label} disabled={off}
    className={`relative flex h-8 items-center ${menu ? "w-[47px] gap-[2px] pl-[5px]" : "min-w-0 flex-1 justify-center"} ${on ? "rounded-xs border border-[#b4b4b4] bg-[#dadada]" : ""}`}>
    <Icon name={icon} off={off} />
    {menu && <Tri className={`ml-1 w-2 ${off ? "fill-[#c0c0c0]" : "fill-[#555]"}`} />}
    {corner && <Tri className={`absolute right-1 bottom-0 w-[6px] ${off ? "fill-[#c0c0c0]" : "fill-[#555]"}`} />}
  </button>
);

const Group = ({ tools, className }: { tools: Tool[]; className: string }) => (
  <div className={`flex shrink-0 ${className}`}>{tools.map((t) => <ToolButton key={t.label} {...t} />)}</div>
);

const bar = "flex items-center border-b border-[#b4b4b4] bg-linear-to-b from-[#fafafa] to-[#ededed]";
const Sep = () => <div className="mx-1 h-5 w-px shrink-0 bg-[#d0d0d0]" />;

const menus: [string, string, string][] = [
  ["Pro", "j", "ect"], ["", "E", "dit"], ["", "V", "iew"], ["", "L", "ayer"], ["", "S", "ettings"], ["", "P", "lugins"], ["Vect", "o", "r"],
  ["", "R", "aster"], ["", "D", "atabase"], ["", "W", "eb"], ["", "M", "esh"], ["Pro", "c", "essing"], ["", "H", "elp"],
];

const field = "rounded-xs border border-[#b4b4b4] bg-white outline-none disabled:bg-[#eee] disabled:text-[#bebebe]";

const Spin = ({ id, label, value, className, off, dim }: { id?: string; label?: string; value: string; className: string; off?: boolean; dim?: boolean }) => (
  <div className={`flex overflow-hidden rounded-xs border border-[#b4b4b4] bg-white ${className}`}>
    <input id={id} aria-label={label} defaultValue={value} disabled={off} className="min-w-0 flex-1 px-1 outline-none disabled:bg-[#eee] disabled:text-[#bebebe]" />
    <div className="flex w-[14px] flex-col border-l border-[#b4b4b4] bg-[#f6f6f6]">
      <button type="button" aria-label="Increase" disabled={off} className="flex flex-1 items-center justify-center"><Tri dir="up" className={`w-2 ${off ? "fill-[#c0c0c0]" : "fill-[#555]"}`} /></button>
      <button type="button" aria-label="Decrease" disabled={off} className="flex flex-1 items-center justify-center"><Tri className={`w-2 ${off || dim ? "fill-[#aaa]" : "fill-[#555]"}`} /></button>
    </div>
  </div>
);

const Check = ({ id, on, label }: { id?: string; on: boolean; label?: string }) => (
  <span className="grid size-[15px] shrink-0 place-items-center">
    <input id={id} type="checkbox" aria-label={label} defaultChecked={on} className="size-[15px] appearance-none border border-[#b8b8b8] bg-white [grid-area:1/1]" />
    {on && <svg viewBox="0 0 12 12" className="pointer-events-none size-3 [grid-area:1/1]" aria-hidden="true"><path d="M2 5.500l3 4.500 4.500-9" fill="none" stroke="#111" strokeWidth="2" /></svg>}
  </span>
);

const Radio = ({ name, label, on = false }: { name: string; label: string; on?: boolean }) => (
  <label className="flex items-center gap-[5px] whitespace-nowrap">
    <input type="radio" name={name} defaultChecked={on} className="mb-[3px] size-[15px] shrink-0 appearance-none rounded-full border border-[#a8a8a8] bg-white checked:bg-[radial-gradient(circle,#444_3.5px,white_4px)]" />
    {label}
  </label>
);

const Btn = ({ icon, children, off, className = "h-[31px] px-[7px]" }: { icon?: ReactNode; children: ReactNode; off?: boolean; className?: string }) => (
  <button type="button" disabled={off} className={`flex shrink-0 items-center gap-[2px] rounded-xs border border-[#b4b4b4] bg-linear-to-b from-white to-[#efefef] whitespace-nowrap disabled:border-[#cacaca] disabled:text-[#bebebe] ${className}`}>
    {icon}{children}
  </button>
);

const DockTitle = ({ children, className }: { children: ReactNode; className: string }) => (
  <div className={`flex shrink-0 justify-between ${className}`}>
    <h2>{children}</h2>
    <div className="flex gap-[3px] pt-1">
      {["Float", "Close"].map((n) => (
        <button key={n} type="button" aria-label={n} className="size-[11px]">
          <svg viewBox="0 0 11 11" className="size-[11px]" fill="none" stroke="#555">
            <rect x=".5" y=".5" width="10" height="10" rx="2" />
            {n === "Float" ? <path d="M4.500 2.500h4v4h-4zM2.500 4.500h4v4h-4z" strokeWidth=".8" /> : <path d="M3 3l5 5M8 3l-5 5" strokeWidth="1.800" />}
          </svg>
        </button>
      ))}
    </div>
  </div>
);

const Dots = () => <div className="mx-auto h-[3px] w-[18px] shrink-0 bg-[radial-gradient(circle,#aaa_0.7px,transparent_1px)] bg-size-[3px_3px]" />;

const sources: { icon: string; label: string; branch?: boolean }[] = [
  { icon: "star", label: "Favorites" }, { icon: "bookmarks", label: "Spatial Bookmarks", branch: true }, { icon: "home", label: "Home", branch: true },
  { icon: "folder", label: "/", branch: true }, { icon: "geopackage", label: "GeoPackage" }, { icon: "feather", label: "SpatiaLite" },
  { icon: "postgres", label: "PostgreSQL" }, { icon: "hana", label: "SAP HANA" }, { icon: "stac", label: "STAC" }, { icon: "mssql", label: "MS SQL Server" },
  { icon: "globe", label: "WMS/WMTS" }, { icon: "cloud", label: "Cloud" }, { icon: "cube", label: "Scenes" }, { icon: "sensor", label: "SensorThings" },
];

const layers = [
  { name: "area_boundary", on: true, swatch: "size-[17px] border border-[#666] bg-[#b9cf50]", text: "font-semibold text-white underline" },
  { name: "area_corners", on: true, swatch: "mx-1 size-[9px] rounded-full border border-[#7d4a3c] bg-[#e2683f]", text: "font-semibold" },
  { name: "sample_tie_point", on: true, swatch: "mx-1 size-[9px] rounded-full border border-[#5d4a42] bg-[#987060]", text: "font-semibold" },
  { name: "ref_barangays", on: true, swatch: "size-[17px] border border-[#aaa] bg-[#f5f5ec]", text: "font-semibold" },
  { name: "ref_municipalities", on: false, swatch: "size-[17px] border border-[#666] bg-[#bcb092]", text: "font-semibold text-[#808080] italic" },
  { name: "ref_provinces", on: false, swatch: "size-[17px] border border-[#666] bg-[#e6b435]", text: "font-semibold text-[#808080] italic" },
];

const Small = ({ name, label, menu }: { name: string; label: string; menu?: boolean }) => (
  <button type="button" aria-label={label} className="relative flex size-[17px]">
    <Icon name={name} className="size-[17px]" />
    {menu && <Tri className="absolute -right-[3px] -bottom-[3px] w-[6px] fill-[#555]" />}
  </button>
);

const Sidebar = () => (
  <aside className="flex w-[226px] shrink-0 flex-col">
    <DockTitle className="h-[30px] pt-[3px] pr-[3px] pl-1">Browser</DockTitle>
    <div className="flex h-7 shrink-0 items-center gap-[9px] px-2 pb-[5px]">
      <Small name="addSel" label="Add selected layers" /><Small name="refresh" label="Refresh" /><Small name="funnel" label="Filter browser" />
      <Small name="collapse" label="Collapse all" /><Small name="info" label="Properties" />
    </div>
    <div className="flex h-[371px] shrink-0 flex-col border border-[#b4b4b4] bg-white">
      <div className="flex min-h-0 flex-1">
        <ul className="min-w-0 flex-1 overflow-hidden pt-px">
          {sources.map((s) => (
            <li key={s.label} className="flex h-[26px] items-center gap-[6px] pl-1">
              <span className="w-[10px]">{s.branch && <Tri dir="right" className="w-2 fill-[#666]" />}</span>
              <Icon name={s.icon} className="size-4" /><span className="whitespace-nowrap">{s.label}</span>
            </li>
          ))}
        </ul>
        <div className="flex w-[15px] flex-col border-l border-[#b4b4b4] bg-[#f8f8f8]">
          <button type="button" aria-label="Scroll up" className="flex h-[14px] items-center justify-center border-b border-[#b4b4b4]"><Tri dir="up" /></button>
          <div className="flex-1" />
          <div className="h-[105px] border-t border-[#b4b4b4] bg-[#e4e4e4]" />
          <button type="button" aria-label="Scroll down" className="flex h-[14px] items-center justify-center border-t border-[#b4b4b4]"><Tri /></button>
        </div>
      </div>
      <div className="flex h-[14px] bg-[#f8f8f8]">
        <button type="button" aria-label="Scroll left" className="flex w-[14px] items-center justify-center border-r border-[#b4b4b4]"><Tri dir="left" /></button>
        <div className="flex-1" />
        <div className="w-[25px] border-x border-[#b4b4b4] bg-[#e4e4e4]" />
        <button type="button" aria-label="Scroll right" className="flex w-[15px] items-center justify-center border-r border-[#b4b4b4]"><Tri dir="right" /></button>
        <div className="w-[14px] bg-[#eee]" />
      </div>
    </div>
    <div className="flex h-[6px] items-center"><Dots /></div>
    <DockTitle className="h-[30px] pt-[3px] pr-[3px] pl-1">Layers</DockTitle>
    <div className="flex h-[29px] shrink-0 items-center gap-[9px] px-2 pb-1">
      <Small name="brush" label="Layer styling" /><Small name="group" label="Add group" /><Small name="eye" label="Map themes" menu />
      <Small name="funnel" label="Filter legend" menu /><Small name="exprFilter" label="Filter by expression" /><Tri className="-ml-1 w-2 fill-[#555]" />
      <Small name="expand" label="Expand all" /><Small name="collapse" label="Collapse all" />
      <button type="button" aria-label="More" className="-mr-1 ml-auto text-[17px] leading-4">»</button>
    </div>
    <ul className="flex-1 border border-[#b4b4b4] border-b-0 bg-white">
      {layers.map((l, i) => (
        <li key={l.name} className={`flex h-[26px] items-center pr-2 pl-6 ${i === 0 ? "bg-[#308cc6]" : ""}`}>
          <Check on={l.on} label={l.name} />
          <span className="ml-[6px] flex w-[23px] shrink-0"><span className={l.swatch} /></span>
          <span className={`min-w-0 flex-1 overflow-hidden whitespace-nowrap ${l.text}`}>{l.name}</span>
          <button type="button" aria-label="Temporary layer" className="flex size-[22px] shrink-0 items-center justify-center rounded-sm border border-[#ddd] bg-[#eee]"><Icon name="chipGray" className="size-[18px]" /></button>
        </li>
      ))}
    </ul>
  </aside>
);

const MapCanvas = () => (
  <div className="h-[265px] shrink-0 overflow-hidden border-l border-[#b4b4b4] bg-[#f5f5ec]">
    <svg viewBox="233 153 1267 265" preserveAspectRatio="xMidYMid slice" className="size-full" role="img" aria-label="Map">
      <g fill="none" stroke="#666">
        <path d="M247 153l30.500 36.500L244 218.500 233 233" /><path d="M841 152l55 56 141 153 60 57" /><path d="M1392 152l21 19 87 64.500" />
      </g>
      <circle cx="765" cy="392" r="3.700" fill="#987060" stroke="#3a2530" />
      <path d="M765.500 391.500L905.500 194.500" stroke="#800080" strokeWidth="3.800" strokeLinecap="round" />
    </svg>
  </div>
);

const groupBox = "rounded-xs border border-[#dcdcdc] bg-[#f7f7f7]";

const NextVertex = () => (
  <section className="flex w-[278px] shrink-0 flex-col">
    <h3 className="font-semibold">Next vertex</h3>
    <div className={`mt-[3px] grid flex-1 grid-cols-[108px_147px] content-start items-center pt-[9px] pl-[10px] ${groupBox}`}>
      <label htmlFor="bearing">Bearing:</label><input id="bearing" defaultValue="0" className={`h-[33px] px-[2px] ${field}`} />
      <span className="mt-px leading-9">Offset</span><output className="italic">0.0</output>
      <label htmlFor="zenith">Zenith:</label><input id="zenith" defaultValue="90" className={`h-8 px-[2px] ${field}`} />
      <label htmlFor="distance" className="mt-2">Distance:</label><Spin id="distance" value="0.000" className="mt-2 h-[30px]" dim />
      <label htmlFor="arc" className="mt-2">Arc Radius</label><Spin id="arc" value="0.000" className="mt-2 h-[30px]" dim />
      <span className="mt-[17px] whitespace-nowrap">Arc Direction</span><div className="mt-3 self-start"><Radio name="dir" label="Clockwise" /></div>
      <div className="col-start-2 mt-[9px]"><Radio name="dir" label="Anti-clockwise" /></div>
      <div className="col-start-2 mt-[11px] flex"><Btn className="h-8 px-[2px]">Add to Bottom</Btn></div>
      <div className="col-start-2 mt-[5px] flex"><Btn className="h-8 px-[2px]">Insert Above</Btn></div>
    </div>
  </section>
);

const SegmentList = () => (
  <section className="flex min-w-0 flex-1 flex-col">
    <h3 className="font-semibold">Segment List</h3>
    <div className={`mt-[3px] flex flex-1 flex-col px-2 pt-[6px] pb-[7px] ${groupBox}`}>
      <div className="flex gap-[6px]">
        <Btn icon={<Icon name="importIcon" className="size-[18px]" />} className="h-[30px] pr-[5px] pl-[3px]">Import</Btn>
        <Btn icon={<Icon name="exportIcon" className="size-[18px]" />} className="h-[30px] pr-[5px] pl-[3px]">Export</Btn>
        <div className="flex-1" />
        <Btn icon={<Icon name="bin" className="mr-[2px] size-[17px]" />} className="h-[30px] px-1">Clear List</Btn>
      </div>
      <div className="mt-[9px] flex flex-1 flex-col border-r border-b border-[#b4b4b4] bg-[linear-gradient(to_right,#eee_15px,white_15px)]">
        <div className="bg-[linear-gradient(#eee,#eee)] bg-size-[100%_28px] bg-no-repeat">
          <table className="w-[535px] table-fixed border-collapse">
            <colgroup><col className="w-[15px]" /><col /><col /><col /><col /><col /></colgroup>
            <thead>
              <tr className="h-7 border-b border-[#b4b4b4] bg-linear-to-b from-[#f8f8f8] to-[#ececec]">
                <th aria-label="Row" />
                {["Bearing", "Distance", "Zenith Angle", "Radius", "Direction"].map((h) => <th key={h} className="border-r border-[#c8c8c8] p-0 font-normal whitespace-nowrap">{h}</th>)}
              </tr>
            </thead>
            <tbody>
              <tr className="h-[30px] border-b border-[#b4b4b4] bg-white">
                <th className="border-r border-[#b4b4b4] bg-[#f4f4f4] p-0 font-normal">1</th>
                {["N 35° 19' ...", "1283.45", "90", "None", "None"].map((c, i) => <td key={i} className="border-r border-[#c0c0c0] py-0 pr-0 pl-[3px] whitespace-nowrap">{c}</td>)}
              </tr>
            </tbody>
          </table>
        </div>
      </div>
      <div className="mt-[7px] flex gap-[6px]">
        <Btn off icon={<Tri dir="up" className="mr-[2px] w-[11px] fill-[#c4c9c0]" />} className="h-[30px] px-[6px]">Move Up</Btn>
        <Btn off icon={<Tri className="mr-[2px] w-[11px] fill-[#c4c9c0]" />} className="h-[30px] px-[6px]">Move Down</Btn>
        <div className="flex-1" />
        <Btn icon={<Icon name="minus" className="mr-px size-[14px]" />} className="h-[30px] px-[6px]">Remove</Btn>
        <div className="w-[253px]" />
        <Btn icon={<Icon name="draw" className="mr-[2px] size-[16px]" />} className="h-[30px] px-[10px]">Draw</Btn>
      </div>
    </div>
  </section>
);

const AzimuthPanel = () => (
  <section className="flex flex-1 flex-col">
    <DockTitle className="h-6 pr-[3px] pl-1">Azimuth and distance</DockTitle>
    <div role="tablist" className="relative z-10 -mb-px flex items-end">
      <button role="tab" type="button" aria-selected="true" className="h-[35px] rounded-t-sm border border-b-0 border-[#b4b4b4] bg-[#fcfcfc] px-3 pb-[2px]">Drawing</button>
      <button role="tab" type="button" className="h-[34px] rounded-t-sm border border-l-0 border-[#b4b4b4] bg-[#e8e8e8] px-[11px]">Options</button>
      <button role="tab" type="button" className="h-[34px] rounded-t-sm border border-l-0 border-[#b4b4b4] bg-[#e8e8e8] px-[11px]">Help</button>
    </div>
    <div className="mr-px mb-[2px] flex flex-1 flex-col border border-[#a8a8a8] bg-[#fcfcfc] pt-[10px] pr-[10px] pb-[10px] pl-3">
      <div className="flex items-center gap-[9px]">
        <Radio name="target" label="Memory Layer" />
        <Radio name="target" label="Active Layer (area_boundary)" on />
        <div className="flex flex-1 items-center gap-[6px]">
          <label htmlFor="crs" className="whitespace-nowrap">Coordinate System:</label>
          <input id="crs" disabled defaultValue="PRS92 / Philippines zone 3" className={`h-8 min-w-0 flex-1 px-[2px] ${field}`} />
        </div>
      </div>
      <h3 className="mt-[10px] font-semibold">Starting point</h3>
      <div className={`mt-[3px] flex h-[49px] items-center gap-2 self-start px-[6px] ${groupBox}`}>
        <label htmlFor="sx">X</label><input id="sx" defaultValue="560167.218" className={`h-8 w-[148px] px-[2px] ${field}`} />
        <label htmlFor="sy" className="-ml-[2px]">Y</label><input id="sy" defaultValue="1628537.085" className={`h-8 w-[148px] px-[2px] ${field}`} />
        <label htmlFor="sz" className="-ml-[2px]">Z</label><input id="sz" disabled defaultValue="90.0" className={`h-8 w-[147px] px-[2px] ${field}`} />
        <Btn icon={<Icon name="pin" className="size-[18px]" />} className="h-8 px-1">From Map</Btn>
        <Btn icon={<Icon name="back" className="mr-px size-[16px]" />} className="-ml-[2px] h-8 px-[5px]">Use Last Vertex</Btn>
      </div>
      <div className="mt-[11px] flex flex-1 gap-2"><NextVertex /><SegmentList /></div>
    </div>
  </section>
);

export default function App() {
  return (
    <div className="flex min-h-screen flex-col overflow-hidden bg-[#efefef] font-['Noto_Sans',sans-serif] text-[17px] leading-[22px] text-[#111]">
      <nav className="flex h-[29px] shrink-0 items-center gap-[14px] border-b border-[#dadada] px-[11px]">
        {menus.map(([a, b, c]) => <button key={a + b + c} type="button">{a}<span className="underline underline-offset-2">{b}</span>{c}</button>)}
      </nav>
      <div className={`h-10 shrink-0 ${bar}`}>
        <Grip className="w-[13px]" />
        <Group className="w-[206px]" tools={[{ icon: "newDoc", label: "New" }, { icon: "open", label: "Open" }, { icon: "save", label: "Save" }, { icon: "newLayout", label: "New layout" }, { icon: "layoutManager", label: "Layout manager" }, { icon: "style", label: "Style manager" }]} />
        <Grip />
        <Group className="w-[550px]" tools={[
          { icon: "hand", label: "Pan", on: true }, { icon: "panSel", label: "Pan to selection" }, { icon: "zoomIn", label: "Zoom in" }, { icon: "zoomOut", label: "Zoom out" },
          { icon: "zoomFull", label: "Zoom full" }, { icon: "zoomSel", label: "Zoom to selection" }, { icon: "zoomLayer", label: "Zoom to layer" }, { icon: "zoomNative", label: "Zoom native", off: true },
          { icon: "zoomLast", label: "Zoom last" }, { icon: "zoomNext", label: "Zoom next", off: true }, { icon: "newMap", label: "New map view" }, { icon: "new3d", label: "New 3D view" },
          { icon: "newBookmark", label: "New bookmark" }, { icon: "bookmarks", label: "Bookmarks" }, { icon: "clock", label: "Temporal controller" }, { icon: "refresh", label: "Refresh map" }]} />
        <Grip className="w-4" />
        <Group className="" tools={[{ icon: "select", label: "Select", menu: true }, { icon: "expr", label: "Select by expression", menu: true }, { icon: "deselect", label: "Deselect", menu: true }, { icon: "selectLoc", label: "Select by location", menu: true }]} />
        <Grip className="w-4" />
        <Group className="w-[139px]" tools={[{ icon: "identify", label: "Identify" }, { icon: "abacus", label: "Field calculator" }, { icon: "gear", label: "Toolbox" }, { icon: "sigma", label: "Statistics" }]} />
        <Group className="w-[175px]" tools={[{ icon: "table", label: "Attribute table", menu: true }, { icon: "measure", label: "Measure", menu: true }, { icon: "tip", label: "Map tips" }, { icon: "action", label: "Run action", off: true, menu: true }]} />
      </div>
      <div className={`h-[41px] shrink-0 pt-px ${bar}`}>
        <Grip className="w-[13px]" />
        <Group className="w-[241px]" tools={[{ icon: "addLayer", label: "Data source manager" }, { icon: "newGpkg", label: "New GeoPackage" }, { icon: "newShp", label: "New Shapefile" }, { icon: "newSpatialite", label: "New SpatiaLite" }, { icon: "newMem", label: "New scratch layer" }, { icon: "newMesh", label: "New mesh" }, { icon: "newVirtual", label: "New virtual layer" }]} />
        <Grip />
        <Group className="w-[470px]" tools={[
          { icon: "pencils", label: "Current edits", off: true, corner: true }, { icon: "pencil", label: "Toggle editing" }, { icon: "saveEdits", label: "Save edits", off: true }, { icon: "digitize", label: "Digitize", off: true, menu: true },
          { icon: "addPoly", label: "Add polygon", off: true }, { icon: "vertex", label: "Vertex tool", off: true, menu: true }, { icon: "editAttr", label: "Modify attributes", off: true }, { icon: "trash", label: "Delete", off: true },
          { icon: "cut", label: "Cut", off: true }, { icon: "copy", label: "Copy", off: true }, { icon: "paste", label: "Paste", off: true }, { icon: "undo", label: "Undo", off: true }, { icon: "redo", label: "Redo", off: true }]} />
        <Grip />
        <Group className="w-[70px]" tools={[{ icon: "label", label: "Labeling" }, { icon: "diagram", label: "Diagrams" }]} />
        <Sep />
        <Group className="w-[67px]" tools={[{ icon: "labelPin", label: "Pinned labels" }, { icon: "labelRed", label: "Unplaced labels" }]} />
        <Sep />
        <Group className="w-[172px]" tools={[{ icon: "labelMove1", label: "Pin labels", off: true }, { icon: "labelEye", label: "Show labels", off: true }, { icon: "labelArrow", label: "Move label", off: true }, { icon: "labelRotate", label: "Rotate label", off: true }, { icon: "labelEdit", label: "Edit label", off: true }]} />
        <Grip className="w-[15px]" />
        <Group className="w-[34px]" tools={[{ icon: "search", label: "MetaSearch" }]} />
        <Grip />
        <Group className="w-[68px]" tools={[{ icon: "python", label: "Python console" }, { icon: "azimuth", label: "Azimuth and distance" }]} />
        <Grip />
        <Group className="w-[34px]" tools={[{ icon: "help", label: "Help contents" }]} />
        <Grip className="w-[15px]" />
      </div>
      <div className={`h-[42px] shrink-0 ${bar}`}>
        <Grip className="w-[13px]" />
        <Group className="w-[102px]" tools={[{ icon: "magnet", label: "Snapping" }, { icon: "snapVertex", label: "Snap mode", off: true, corner: true }, { icon: "snapDots", label: "Snap type", off: true, on: true }]} />
        <Spin label="Tolerance" value="12" className="ml-[2px] h-[31px] w-[114px]" off />
        <div className="ml-px grid h-[31px] w-[124px] items-center">
          <select aria-label="Units" disabled className="h-[31px] appearance-none rounded-xs border border-[#c4c4c4] bg-[#f8f8f8] px-1 text-[#bebebe] [grid-area:1/1]"><option>px</option></select>
          <Tri className="pointer-events-none mr-2 w-2 justify-self-end fill-[#c0c0c0] [grid-area:1/1]" />
        </div>
        <Group className="w-[186px]" tools={[{ icon: "topo", label: "Topological editing" }, { icon: "overlap", label: "Avoid overlap", corner: true }, { icon: "intersect", label: "Snap on intersection", off: true }, { icon: "selfSnap", label: "Self snapping", off: true, menu: true }, { icon: "trace", label: "Tracing", off: true }]} />
      </div>
      <main className="flex flex-1">
        <Sidebar />
        <div className="w-[6px] shrink-0" />
        <div className="flex min-w-0 flex-1 flex-col pt-px">
          <MapCanvas />
          <div className="h-[10px] shrink-0 pt-[2px]"><Dots /></div>
          <AzimuthPanel />
        </div>
      </main>
      <footer className="flex h-[38px] shrink-0 items-center pr-[30px] pl-1 text-[14px]">
        <div className={`flex h-8 w-[310px] items-center gap-[7px] px-[7px] text-[17px] ${field}`}>
          <Icon name="find" className="size-[15px]" />
          <input aria-label="Locator" placeholder="Type to locate (Ctrl+K)" className="min-w-0 flex-1 outline-none placeholder:text-[#888]" />
        </div>
        <span className="ml-[9px]">Ready</span>
        <div className="ml-auto flex items-center">
          <label htmlFor="coord">Coordinate</label><input id="coord" className={`mr-1 ml-[3px] h-7 w-[50px] ${field}`} />
          <button type="button" aria-label="Toggle extents"><Icon name="mouse" className="size-[18px]" /></button>
          <label htmlFor="scale" className="mr-[3px] ml-3">Scale</label>
          <div className="grid h-8 w-[108px] items-center">
            <select id="scale" className={`h-8 appearance-none px-[3px] [grid-area:1/1] ${field}`}><option>1:20832</option></select>
            <span className="pointer-events-none flex h-8 w-[21px] items-center justify-center justify-self-end border-l border-[#b4b4b4] [grid-area:1/1]"><Tri /></span>
          </div>
          <Icon name="lock" className="mr-2 ml-[10px] size-4" />
          <label htmlFor="mag">Magnifier</label><Spin id="mag" value="100%" className="ml-[3px] h-[31px] w-[102px]" />
          <label htmlFor="rot" className="ml-[9px]">Rotation</label><Spin id="rot" value="0.0 °" className="mr-[7px] ml-2 h-[30px] w-[102px]" />
          <Check id="render" on /><label htmlFor="render" className="ml-1">Render</label>
          <button type="button" className="mr-6 ml-[15px] flex items-center gap-px"><Icon name="crs" className="size-[17px]" />EPSG:3123</button>
          <button type="button" aria-label="Messages" className="flex"><Icon name="bubble" className="size-[18px]" /></button>
        </div>
      </footer>
    </div>
  );
}
